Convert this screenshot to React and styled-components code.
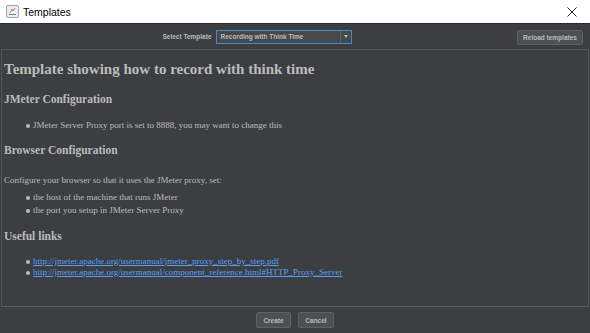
import React from 'react';
import styled, { createGlobalStyle } from 'styled-components';

const Global = createGlobalStyle`
  html, body {
    margin: 0;
    padding: 0;
    width: 590px;
    height: 333px;
    overflow: hidden;
    background: #3c3f41;
  }
`;

const Window = styled.div`
  width: 590px;
  height: 333px;
  display: flex;
  flex-direction: column;
  background: #3c3f41;
  font-family: "Liberation Sans", Arial, sans-serif;
`;

const TitleBar = styled.div`
  height: 24px;
  background: #ffffff;
  display: flex;
  align-items: center;
  padding: 0 6px;
  border-bottom: 1px solid #2b2b2b;
  box-sizing: border-box;
`;

const AppIcon = styled.svg`
  width: 13px;
  height: 13px;
  margin-right: 4px;
`;

const Title = styled.span`
  flex: 1;
  font-size: 10.5px;
  color: #000;
`;

const CloseBtn = styled.svg`
  width: 10px;
  height: 10px;
  margin-right: 7px;
`;

const Toolbar = styled.div`
  height: 25px;
  display: flex;
  align-items: center;
  position: relative;
  justify-content: center;
  padding-right: 76px;
`;

const Label = styled.span`
  font-size: 6.5px;
  font-weight: 700;
  color: #bbbbbb;
  margin-right: 4px;
`;

const Select = styled.div`
  width: 136px;
  height: 14px;
  box-sizing: border-box;
  border: 1px solid #4a88c7;
  background: #45494a;
  display: flex;
  align-items: center;
`;

const SelectText = styled.span`
  flex: 1;
  font-size: 6.5px;
  font-weight: 700;
  color: #bbbbbb;
  padding-left: 4px;
`;

const Arrow = styled.div`
  width: 10px;
  height: 100%;
  border-left: 1px solid #5e6060;
  display: flex;
  align-items: center;
  justify-content: center;
  &::after {
    content: '';
    border-left: 2.5px solid transparent;
    border-right: 2.5px solid transparent;
    border-top: 3px solid #bbbbbb;
  }
`;

const Button = styled.div`
  height: ${({ $h }) => $h || 15}px;
  width: ${({ $w }) => $w}px;
  box-sizing: border-box;
  border: 1px solid #5e6060;
  border-radius: 2px;
  background: #4c5052;
  color: #bbbbbb;
  font-size: 6.5px;
  font-weight: 700;
  display: flex;
  align-items: center;
  justify-content: center;
`;

const ReloadWrap = styled.div`
  position: absolute;
  right: 7px;
  top: 6px;
`;

const Content = styled.div`
  flex: 1;
  margin: 0 1px;
  border: 1px solid #555555;
  border-bottom-color: #5a5d5f;
  padding: 10px 2px;
  font-family: "Liberation Serif", "Times New Roman", serif;
  color: #bbbbbb;
`;

const H1 = styled.h1`
  font-family: "Liberation Serif", "Times New Roman", serif;
  font-size: 15px;
  line-height: 18px;
  margin: 0 0 14px;
  font-weight: 700;
`;

const H2 = styled.h2`
  font-family: "Liberation Serif", "Times New Roman", serif;
  font-size: 11.5px;
  line-height: 14px;
  margin: 0 0 ${({ $mb }) => $mb}px;
  font-weight: 700;
`;

const List = styled.ul`
  margin: 0 0 ${({ $mb }) => $mb}px;
  padding-left: 22px;
  list-style: none;
`;

const Item = styled.li`
  font-size: 9px;
  line-height: ${({ $lh }) => $lh || 13}px;
  display: flex;
  align-items: center;
  &::before {
    content: '';
    width: 4px;
    height: 4px;
    border-radius: 50%;
    background: #bbbbbb;
    margin-right: 3px;
  }
`;

const Para = styled.p`
  font-size: 9px;
  line-height: 12px;
  margin: 0 0 5px;
`;

const Link = styled.a`
  color: #589df6;
  text-decoration: underline;
`;

const Footer = styled.div`
  height: 26px;
  display: flex;
  align-items: center;
  justify-content: center;
  gap: 7px;
`;

export default function App() {
  return (
    <>
      <Global />
      <Window>
        <TitleBar>
          <AppIcon viewBox="0 0 13 13">
            <rect x="0.5" y="0.5" width="12" height="12" rx="1.5" fill="#e8eef4" stroke="#9aa6b2" />
            <path d="M3 9.5 L10 9.5" stroke="#6b7d8f" strokeWidth="1" />
            <path d="M4 8 L6 4 L7 6 L9 3" stroke="#c9803a" strokeWidth="1" fill="none" />
          </AppIcon>
          <Title>Templates</Title>
          <CloseBtn viewBox="0 0 10 10">
            <path d="M0.5 0.5 L9.5 9.5 M9.5 0.5 L0.5 9.5" stroke="#222" strokeWidth="1" />
          </CloseBtn>
        </TitleBar>
        <Toolbar>
          <Label>Select Template</Label>
          <Select>
            <SelectText>Recording with Think Time</SelectText>
            <Arrow />
          </Select>
          <ReloadWrap>
            <Button $w={66}>Reload templates</Button>
          </ReloadWrap>
        </Toolbar>
        <Content>
          <H1>Template showing how to record with think time</H1>
          <H2 $mb={13}>JMeter Configuration</H2>
          <List $mb={11}>
            <Item>JMeter Server Proxy port is set to 8888, you may want to change this</Item>
          </List>
          <H2 $mb={17}>Browser Configuration</H2>
          <Para>Configure your browser so that it uses the JMeter proxy, set:</Para>
          <List $mb={12}>
            <Item>the host of the machine that runs JMeter</Item>
            <Item>the port you setup in JMeter Server Proxy</Item>
          </List>
          <H2 $mb={13}>Useful links</H2>
          <List $mb={0}>
            <Item $lh={11}>
              <Link href="#">http://jmeter.apache.org/usermanual/jmeter_proxy_step_by_step.pdf</Link>
            </Item>
            <Item $lh={11}>
              <Link href="#">http://jmeter.apache.org/usermanual/component_reference.html#HTTP_Proxy_Server</Link>
            </Item>
          </List>
        </Content>
        <Footer>
          <Button $w={35} $h={16}>Create</Button>
          <Button $w={36} $h={16}>Cancel</Button>
        </Footer>
      </Window>
    </>
  );
}
